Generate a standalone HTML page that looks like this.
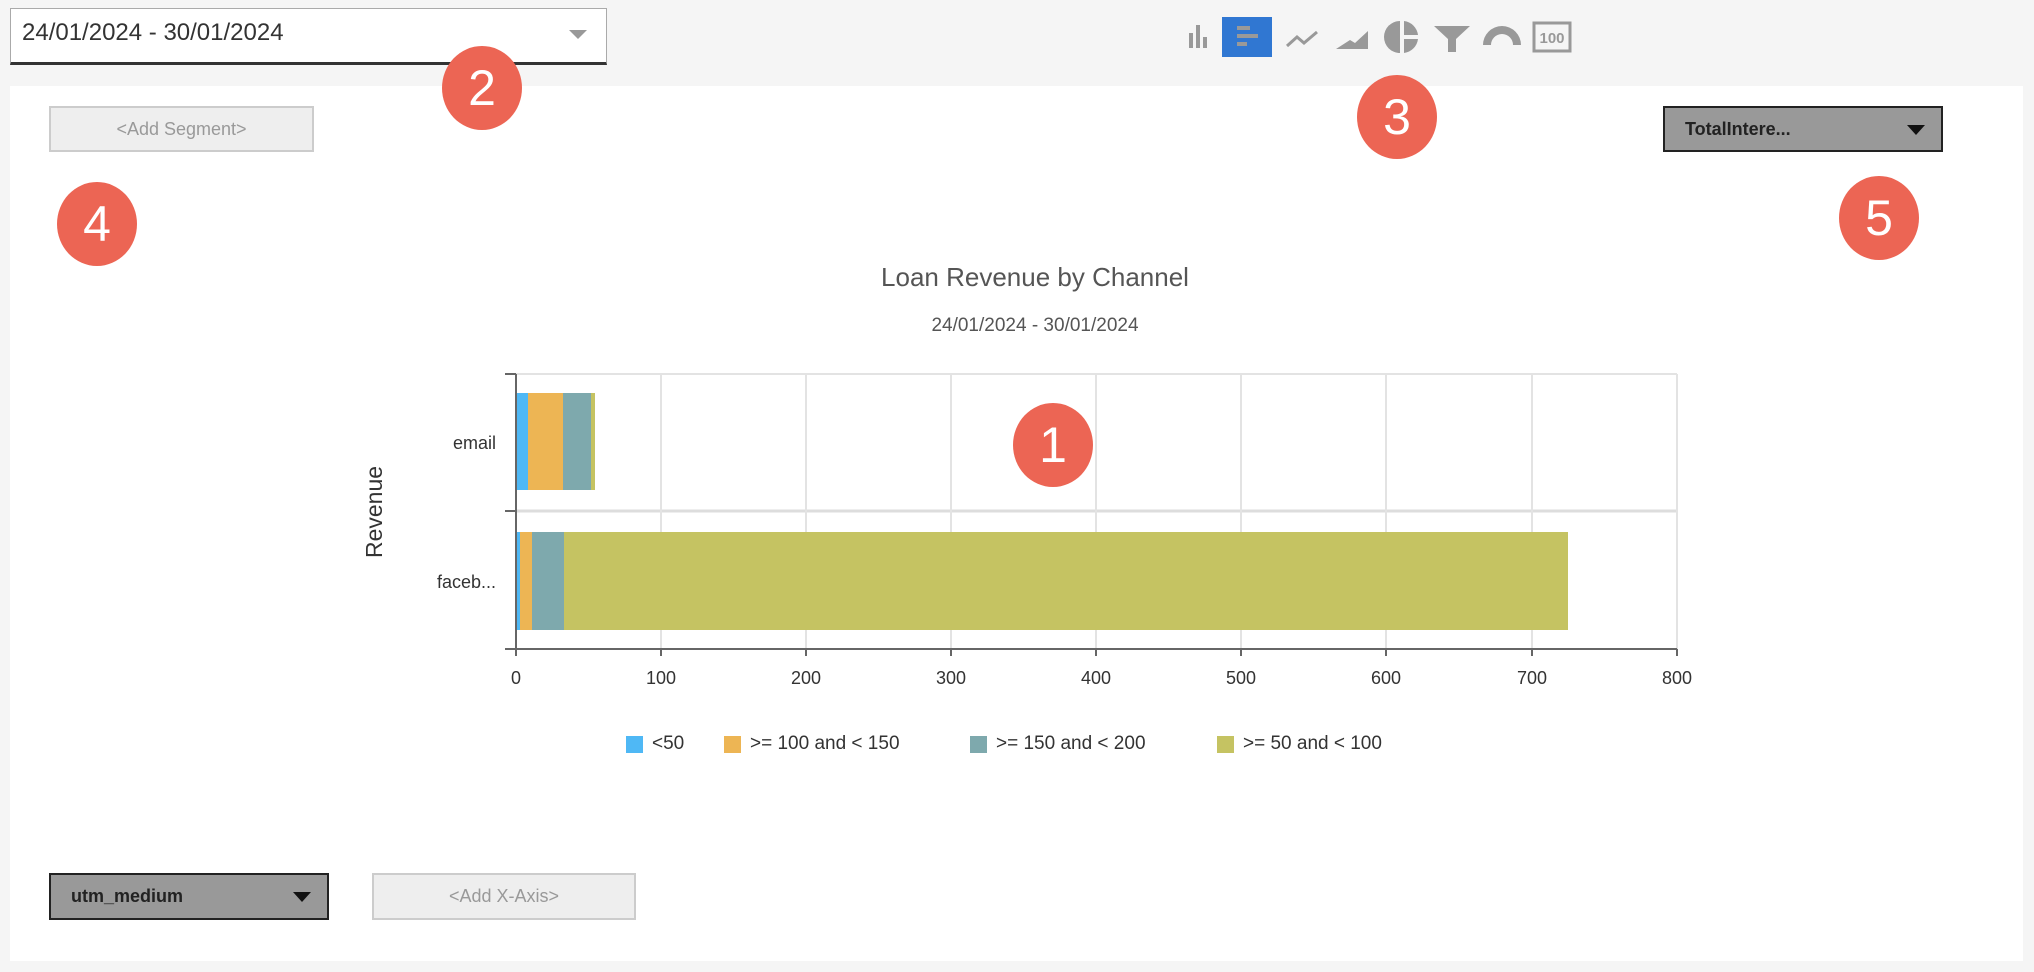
<!DOCTYPE html>
<html><head><meta charset="utf-8"><style>
*{margin:0;padding:0;box-sizing:border-box}
body{width:2034px;height:972px;background:#f5f5f5;font-family:"Liberation Sans",sans-serif;position:relative;overflow:hidden}
.abs{position:absolute}
.badge{position:absolute;width:80px;height:84px;border-radius:50%;background:#ec6554;color:#fff;font-size:50px;display:flex;align-items:center;justify-content:center}
.btn{position:absolute;display:flex;align-items:center;justify-content:center;font-size:18px}
.lg{position:absolute;top:735px;height:18px;font-size:19px;color:#333;display:flex;align-items:center}
.lg i{display:inline-block;width:17px;height:17px;margin-right:9px}
.xl{position:absolute;top:668px;font-size:18px;color:#333;width:60px;text-align:center;margin-left:-30px}
</style></head><body>
<div class="abs" style="left:10px;top:8px;width:597px;height:57px;background:#fff;border:1px solid #aaa;border-bottom:3px solid #333"></div>
<div class="abs" style="left:22px;top:19px;font-size:24px;color:#333">24/01/2024 - 30/01/2024</div>
<div class="abs" style="left:569px;top:30px;width:0;height:0;border-left:9px solid transparent;border-right:9px solid transparent;border-top:9px solid #999"></div>

<svg class="abs" style="left:1180px;top:12px" width="400" height="48" viewBox="0 0 400 48">
<g fill="#999">
<rect x="9" y="21" width="4" height="15"/><rect x="16" y="13" width="4" height="23"/><rect x="23" y="25" width="4" height="11"/>
<rect x="42" y="5" width="50" height="40" fill="#3077d2"/>
<rect x="57" y="14" width="13" height="4"/><rect x="57" y="22" width="21" height="4"/><rect x="57" y="30" width="10" height="4"/>
<polyline points="107,34 117,25 124,31 137,20" fill="none" stroke="#999" stroke-width="3"/>
<polygon points="156,37 170,28 175,31 188,19 188,37"/>
<path d="M220,9 A16,16 0 0,0 220,41 Z"/><path d="M224,9 A16,16 0 0,1 238,23 L224,23 Z"/><path d="M224,27 L238,27 A16,16 0 0,1 224,41 Z"/>
<polygon points="254,14 290,14 276,27 276,40 268,40 268,27"/>
<path d="M303,33 A19,19 0 0,1 341,33 L333,33 A11,11 0 0,0 311,33 Z"/>
<rect x="354" y="11" width="36" height="28" fill="none" stroke="#999" stroke-width="3"/>
<text x="372" y="31" font-size="15" font-weight="bold" text-anchor="middle" font-family="Liberation Sans">100</text>
</g></svg>

<div class="abs" style="left:10px;top:86px;width:2013px;height:875px;background:#fff"></div>

<div class="btn" style="left:49px;top:106px;width:265px;height:46px;background:#eee;border:2px solid #ccc;color:#999">&lt;Add Segment&gt;</div>
<div class="btn" style="left:1663px;top:106px;width:280px;height:46px;background:#999;border:2px solid #222;color:#222;font-weight:bold;justify-content:flex-start;padding-left:20px">TotalIntere...</div>
<div class="abs" style="left:1907px;top:125px;border-left:9px solid transparent;border-right:9px solid transparent;border-top:10px solid #111"></div>
<div class="btn" style="left:49px;top:873px;width:280px;height:47px;background:#999;border:2px solid #222;color:#222;font-weight:bold;justify-content:flex-start;padding-left:20px">utm_medium</div>
<div class="abs" style="left:293px;top:892px;border-left:9px solid transparent;border-right:9px solid transparent;border-top:10px solid #111"></div>
<div class="btn" style="left:372px;top:873px;width:264px;height:47px;background:#eee;border:2px solid #ccc;color:#999">&lt;Add X-Axis&gt;</div>

<div class="abs" style="left:0;width:2034px;top:262px;text-align:center;font-size:26px;color:#555;padding-left:36px">Loan Revenue by Channel</div>
<div class="abs" style="left:0;width:2034px;top:315px;text-align:center;font-size:19px;color:#555;padding-left:36px">24/01/2024 - 30/01/2024</div>

<svg class="abs" style="left:0;top:0" width="2034" height="972">
<g stroke="#e3e3e3" stroke-width="2">
<line x1="516" y1="374" x2="1677" y2="374"/>
<line x1="516" y1="511" x2="1677" y2="511" stroke="#ddd" stroke-width="3"/>
<line x1="661" y1="374" x2="661" y2="649"/><line x1="806" y1="374" x2="806" y2="649"/><line x1="951" y1="374" x2="951" y2="649"/><line x1="1096" y1="374" x2="1096" y2="649"/><line x1="1241" y1="374" x2="1241" y2="649"/><line x1="1386" y1="374" x2="1386" y2="649"/><line x1="1532" y1="374" x2="1532" y2="649"/><line x1="1677" y1="374" x2="1677" y2="649"/>
</g>
<rect x="516" y="393" width="12" height="97" fill="#4fb8f5"/><rect x="528" y="393" width="35" height="97" fill="#edb554"/><rect x="563" y="393" width="28" height="97" fill="#7ea9ad"/><rect x="591" y="393" width="4" height="97" fill="#c5c362"/>
<rect x="516" y="532" width="4" height="98" fill="#4fb8f5"/><rect x="520" y="532" width="12" height="98" fill="#edb554"/><rect x="532" y="532" width="32" height="98" fill="#7ea9ad"/><rect x="564" y="532" width="1004" height="98" fill="#c5c362"/>
<g stroke="#666" stroke-width="2">
<line x1="516" y1="374" x2="516" y2="650"/><line x1="505" y1="649" x2="1677" y2="649"/>
<line x1="505" y1="374" x2="516" y2="374"/><line x1="505" y1="511" x2="516" y2="511"/>
<line x1="661" y1="649" x2="661" y2="656"/><line x1="806" y1="649" x2="806" y2="656"/><line x1="951" y1="649" x2="951" y2="656"/><line x1="1096" y1="649" x2="1096" y2="656"/><line x1="1241" y1="649" x2="1241" y2="656"/><line x1="1386" y1="649" x2="1386" y2="656"/><line x1="1532" y1="649" x2="1532" y2="656"/><line x1="1677" y1="649" x2="1677" y2="656"/><line x1="516" y1="649" x2="516" y2="656"/>
</g>
<g font-family="Liberation Sans" font-size="18" fill="#333">
<text x="496" y="449" text-anchor="end">email</text>
<text x="496" y="588" text-anchor="end">faceb...</text>
</g>
<text transform="translate(382,512) rotate(-90)" text-anchor="middle" font-family="Liberation Sans" font-size="23" fill="#333">Revenue</text>
</svg>
<div class="xl" style="left:516px">0</div><div class="xl" style="left:661px">100</div><div class="xl" style="left:806px">200</div><div class="xl" style="left:951px">300</div><div class="xl" style="left:1096px">400</div><div class="xl" style="left:1241px">500</div><div class="xl" style="left:1386px">600</div><div class="xl" style="left:1532px">700</div><div class="xl" style="left:1677px">800</div>

<div class="lg" style="left:626px"><i style="background:#4fb8f5"></i>&lt;50</div>
<div class="lg" style="left:724px"><i style="background:#edb554"></i>&gt;= 100 and &lt; 150</div>
<div class="lg" style="left:970px"><i style="background:#7ea9ad"></i>&gt;= 150 and &lt; 200</div>
<div class="lg" style="left:1217px"><i style="background:#c5c362"></i>&gt;= 50 and &lt; 100</div>

<div class="badge" style="left:1013px;top:403px">1</div>
<div class="badge" style="left:442px;top:46px">2</div>
<div class="badge" style="left:1357px;top:75px">3</div>
<div class="badge" style="left:57px;top:182px">4</div>
<div class="badge" style="left:1839px;top:176px">5</div>
</body></html>
